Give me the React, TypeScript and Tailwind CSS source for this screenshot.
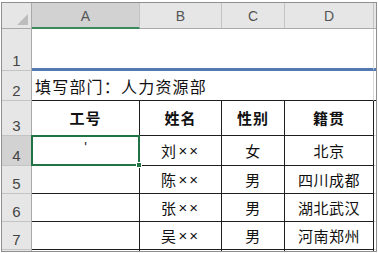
import React from "react";

const CJK = { fontFamily: '"Noto Sans CJK SC", "Noto Sans", sans-serif' };
const LAT = { fontFamily: '"Liberation Sans", Arial, sans-serif' };

function ColHead({ label, active }: { label: string; active?: boolean }) {
  return (
    <div
      className={
        "flex items-center justify-center pt-[2px] text-[14px] text-[#555] border-r border-[#c4c4c4] " +
        (active ? "bg-[#d2d2d2] border-b-2 border-b-[#3b8a5c]" : "bg-[#e6e6e6] border-b border-b-[#a9a9a9]")
      }
      style={LAT}
    >
      {label}
    </div>
  );
}

function RowHead({ n, active }: { n: string; active?: boolean }) {
  return (
    <div
      className={
        "flex items-end justify-center pb-[2px] text-[15px] leading-none text-[#444] border-b border-[#c4c4c4] border-r border-r-[#a9a9a9] " +
        (active ? "bg-[#d2d2d2]" : "bg-[#e6e6e6]")
      }
      style={LAT}
    >
      {n}
    </div>
  );
}

function Cell({ children, bold }: { children?: React.ReactNode; bold?: boolean }) {
  return (
    <div
      className={
        "flex items-center justify-center border-r border-b border-[#1e1e1e] text-[#111] " +
        (bold ? "font-bold text-[15px] tracking-[1px] pt-[1px]" : "text-[15px] tracking-[0.5px] pt-[2px]")
      }
      style={CJK}
    >
      {children}
    </div>
  );
}

function Name({ s }: { s: string }) {
  return (
    <span className="flex items-center">
      <span>{s}</span>
      <span className="text-[15px] tracking-[2px] ml-[2px]" style={LAT}>
        ××
      </span>
    </span>
  );
}

const rows = [
  { n: "4", a: "'", b: "刘", c: "女", d: "北京", active: true },
  { n: "5", a: "", b: "陈", c: "男", d: "四川成都" },
  { n: "6", a: "", b: "张", c: "男", d: "湖北武汉" },
  { n: "7", a: "", b: "吴", c: "男", d: "河南郑州" },
];

export default function App() {
  return (
    <div className="w-[378px] h-[253px] bg-white pt-[2px] pl-[1px] overflow-hidden">
      <div className="w-[376px] h-[250px] border border-[#8f8f8f] bg-white">
        <div className="grid grid-cols-[30px_108px_82px_63px_89px_2px] grid-rows-[26px_42px_30px_35px_30px_28px_28px_28px_1px]">
          {/* header row */}
          <div className="relative bg-[#e6e6e6] border-r border-r-[#a9a9a9] border-b border-b-[#a9a9a9]">
            <svg className="absolute right-[3px] bottom-[3px]" width="11" height="11" viewBox="0 0 11 11">
              <polygon points="11,0 11,11 0,11" fill="#bdbdbd" />
            </svg>
          </div>
          <ColHead label="A" active />
          <ColHead label="B" />
          <ColHead label="C" />
          <ColHead label="D" />
          <div className="bg-[#e6e6e6] border-b border-[#a9a9a9]" />

          {/* row 1 */}
          <RowHead n="1" />
          <div className="col-span-4 border-b-[3px] border-b-[#5479b0] border-r border-r-[#dcdcdc]" />
          <div className="border-b-[3px] border-b-[#5479b0]" />

          {/* row 2 */}
          <RowHead n="2" />
          <div
            className="col-span-4 flex items-center pl-[3px] pt-[1px] text-[16px] tracking-[1.2px] text-[#111] border-b border-b-[#1e1e1e] border-r border-r-[#dcdcdc]"
            style={CJK}
          >
            填写部门：人力资源部
          </div>
          <div className="border-b border-b-[#1e1e1e]" />

          {/* row 3 */}
          <RowHead n="3" />
          <Cell bold>工号</Cell>
          <Cell bold>姓名</Cell>
          <Cell bold>性别</Cell>
          <Cell bold>籍贯</Cell>
          <div className="border-b border-[#dcdcdc]" />

          {rows.map((r) => (
            <React.Fragment key={r.n}>
              <RowHead n={r.n} active={r.active} />
              {r.active ? (
                <div className="relative border-r border-b border-[#1e1e1e]">
                  <div
                    className="absolute left-0 right-0 top-[4px] text-center text-[14px] leading-none text-[#222]"
                    style={LAT}
                  >
                    {r.a}
                  </div>
                  <div className="absolute left-[-1px] top-[-1px] right-[-1px] bottom-[-1px] border-2 border-[#217346]" />
                  <div className="absolute right-[-3px] bottom-[-3px] w-[6px] h-[6px] bg-[#217346] border border-white" />
                </div>
              ) : (
                <Cell />
              )}
              <Cell>
                <Name s={r.b} />
              </Cell>
              <Cell>{r.c}</Cell>
              <Cell>{r.d}</Cell>
              <div className="border-b border-[#dcdcdc]" />
            </React.Fragment>
          ))}

          {/* sliver row */}
          <div className="bg-[#e6e6e6] border-r border-[#a9a9a9]" />
          <div className="border-r border-[#1e1e1e]" />
          <div className="border-r border-[#1e1e1e]" />
          <div className="border-r border-[#1e1e1e]" />
          <div className="border-r border-[#1e1e1e]" />
          <div />
        </div>
      </div>
    </div>
  );
}
